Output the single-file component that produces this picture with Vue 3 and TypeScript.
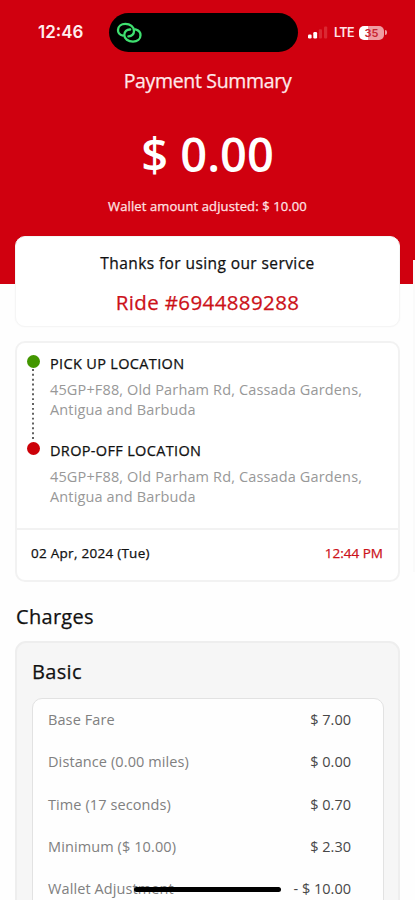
<script setup lang="ts">
interface Stop {
  kind: 'pickup' | 'dropoff'
  title: string
  lines: string[]
}

interface Charge {
  label: string
  amount: string
}

const stops: Stop[] = [
  {
    kind: 'pickup',
    title: 'PICK UP LOCATION',
    lines: ['45GP+F88, Old Parham Rd, Cassada Gardens,', 'Antigua and Barbuda'],
  },
  {
    kind: 'dropoff',
    title: 'DROP-OFF LOCATION',
    lines: ['45GP+F88, Old Parham Rd, Cassada Gardens,', 'Antigua and Barbuda'],
  },
]

const charges: Charge[] = [
  { label: 'Base Fare', amount: '$ 7.00' },
  { label: 'Distance (0.00 miles)', amount: '$ 0.00' },
  { label: 'Time (17 seconds)', amount: '$ 0.70' },
  { label: 'Minimum ($ 10.00)', amount: '$ 2.30' },
  { label: 'Wallet Adjustment', amount: '- $ 10.00' },
]
</script>

<template>
  <div class="screen">
    <header class="hero">
      <div class="status">
        <span class="clock">12:46</span>
        <div class="island">
          <svg class="link" width="26" height="22" viewBox="0 0 26 22" fill="none" stroke="#3fe070" stroke-width="2.3" stroke-linecap="round">
            <path d="M7 13.6 C3.6 13 1.9 10.6 2 7.9 C2.1 4.3 5.2 1.9 9.4 1.9 C14.2 1.9 18 5 18 8.9 C18 12.3 15.6 14.5 12.4 14.3" />
            <path d="M19.4 7.4 C22.6 8.2 24.5 10.6 24.5 13.3 C24.5 17 21.3 19.6 17 19.6 C12.2 19.6 8.3 16.8 8.3 12.9 C8.3 9.5 10.8 7.3 14.2 7.5" />
          </svg>
        </div>
        <div class="indicators">
          <svg width="20" height="13" viewBox="0 0 20 13">
            <rect x="0" y="8.5" width="3.6" height="4" rx="1.2" fill="#fff" />
            <rect x="5.3" y="6" width="3.8" height="6.5" rx="1.2" fill="#fff" />
            <rect x="10.8" y="3.2" width="3.2" height="9.3" rx="1" fill="#da2832" />
            <rect x="16" y="0.5" width="3.2" height="12" rx="1" fill="#da2832" />
          </svg>
          <span class="network">LTE</span>
          <div class="battery"><span class="level">35</span></div>
          <span class="nub"></span>
        </div>
      </div>
      <h1 class="title">Payment Summary</h1>
      <p class="total">$ 0.00</p>
      <p class="adjusted">Wallet amount adjusted: $ 10.00</p>
    </header>

    <main class="content">
      <section class="thanks">
        <p class="thanks-text">Thanks for using our service</p>
        <p class="ride">Ride #6944889288</p>
      </section>

      <section class="trip">
        <div class="route">
          <div v-for="stop in stops" :key="stop.kind" class="stop" :class="stop.kind">
            <div class="rail">
              <span class="dot"></span>
              <svg v-if="stop.kind === 'pickup'" class="dots" width="2" height="75" viewBox="0 0 2 75">
                <line x1="1" y1="1" x2="1" y2="75" stroke="#4c4c4c" stroke-width="1.8" stroke-dasharray="2 3" />
              </svg>
            </div>
            <div class="place">
              <h2 class="stop-title">{{ stop.title }}</h2>
              <p v-for="line in stop.lines" :key="line" class="address">{{ line }}</p>
            </div>
          </div>
        </div>
        <div class="when">
          <span class="date">02 Apr, 2024 (Tue)</span>
          <span class="time">12:44 PM</span>
        </div>
      </section>

      <h2 class="heading">Charges</h2>
      <section class="charges">
        <h3 class="plan">Basic</h3>
        <div class="items">
          <div v-for="charge in charges" :key="charge.label" class="item">
            <span class="label">{{ charge.label }}</span>
            <span class="amount">{{ charge.amount }}</span>
          </div>
        </div>
      </section>
    </main>

    <div class="scroll-edge"></div>
    <div class="home-bar"></div>
  </div>
</template>

<style>
body {
  margin: 0;
  background: #fefefe;
}
</style>

<style scoped>
.screen {
  position: relative;
  width: 415px;
  height: 900px;
  overflow: hidden;
  background: #fefefe;
  font-family: 'Open Sans', 'Noto Sans', sans-serif;
  color: #111;
}

.screen * {
  box-sizing: border-box;
}

h1,
h2,
h3,
p {
  margin: 0;
  font-weight: 400;
  white-space: nowrap;
}

.title,
.adjusted,
.thanks-text,
.ride,
.stop-title,
.when,
.heading,
.plan {
  -webkit-text-stroke: 0.25px currentColor;
}

.hero {
  height: 284px;
  padding-top: 13px;
  background: #d0000f;
  color: #fff;
  text-align: center;
}

.status {
  display: grid;
  grid-template-columns: 109px 189px 1fr;
  align-items: center;
  height: 39px;
  font-family: Inter, sans-serif;
}

.clock {
  padding-left: 38px;
  text-align: left;
  font-size: 17px;
  font-weight: 600;
  line-height: 39px;
  color: #ffeeee;
}

.island {
  height: 39px;
  padding: 9px 0 0 7px;
  border-radius: 20px;
  background: #000;
  text-align: left;
}

.link {
  display: block;
}

.indicators {
  display: flex;
  align-items: center;
  padding-left: 10px;
}

.network {
  width: 21px;
  margin-left: 5.5px;
  font-size: 12.5px;
  font-weight: 600;
  letter-spacing: -0.6px;
  color: #ffe5e7;
}

.battery {
  width: 25px;
  height: 14px;
  margin-left: 4.5px;
  border-radius: 5px;
  background: linear-gradient(90deg, #fff 0 36%, #ef9da2 36%);
}

.level {
  display: block;
  font-size: 11px;
  font-weight: 600;
  line-height: 14px;
  color: #c82532;
}

.nub {
  width: 2px;
  height: 5px;
  margin-left: 1px;
  border-radius: 0 2px 2px 0;
  background: #ef9da2;
}

.title {
  margin-top: 15px;
  font-size: 19.5px;
  line-height: 28px;
  letter-spacing: -0.33px;
  color: #ffe9ea;
}

.total {
  margin-top: 26px;
  font-size: 47px;
  font-weight: 600;
  line-height: 66px;
}

.adjusted {
  margin-top: 9px;
  font-size: 13px;
  line-height: 20px;
  letter-spacing: 0.11px;
  color: #ffe3e4;
}

.content {
  width: 385px;
  margin: -48px 0 0 15px;
}

.thanks {
  height: 91px;
  padding-top: 16px;
  border: 1px solid #f5f5f5;
  border-radius: 10px;
  background: #fff;
  box-shadow: 0 0 2px rgba(0, 0, 0, 0.04);
  text-align: center;
}

.thanks-text {
  font-size: 15.5px;
  line-height: 20px;
  letter-spacing: 0.41px;
}

.ride {
  margin-top: 15px;
  font-size: 20.5px;
  line-height: 28px;
  letter-spacing: 0.38px;
  color: #cc1119;
}

.trip {
  height: 241px;
  margin-top: 14px;
  border: 2px solid #f2f2f2;
  border-radius: 10px;
  background: #fff;
}

.route {
  height: 185px;
  padding: 11px 0 0 9px;
}

.stop {
  display: flex;
  height: 87px;
}

.rail {
  display: flex;
  flex-direction: column;
  align-items: center;
  width: 14px;
}

.dot {
  flex: none;
  width: 13px;
  height: 13px;
  margin-top: 1px;
  border-radius: 50%;
}

.pickup .dot {
  background: #429600;
}

.dropoff .dot {
  background: #cc0008;
}

.place {
  margin-left: 10px;
  padding-top: 1px;
}

.stop-title {
  height: 25px;
  font-size: 14.5px;
  line-height: 18px;
  letter-spacing: 0.34px;
}

.address {
  font-size: 14.5px;
  line-height: 20px;
  letter-spacing: 0.14px;
  color: #989898;
}

.when {
  display: flex;
  justify-content: space-between;
  height: 52px;
  padding: 0 15px 0 14px;
  border-top: 2px solid #f2f2f2;
  font-size: 13.5px;
  line-height: 46px;
}

.date {
  letter-spacing: 0.27px;
}

.time {
  color: #cc1119;
}

.heading {
  margin: 21px 0 0 1px;
  font-size: 20px;
  line-height: 28px;
  letter-spacing: 0.3px;
}

.charges {
  height: 400px;
  margin-top: 10px;
  padding: 15px 16px 0 16px;
  border: 2px solid #eeeeee;
  border-radius: 11px;
  background: #f6f6f6;
}

.plan {
  margin-left: -1px;
  font-size: 20px;
  line-height: 28px;
  letter-spacing: 0.35px;
}

.items {
  width: 352px;
  height: 300px;
  margin: 12px 0 0 -1px;
  padding: 0 32px 0 15px;
  border: 1px solid #e2e2e2;
  border-radius: 10px;
  background: #fefefe;
}

.item {
  display: flex;
  justify-content: space-between;
  height: 42.25px;
  font-size: 14.5px;
  line-height: 42px;
}

.label {
  letter-spacing: 0.1px;
  color: #808080;
}

.amount {
  color: #484848;
}

.scroll-edge {
  position: absolute;
  top: 260px;
  right: 0;
  width: 2px;
  height: 312px;
  background: #fafafa;
}

.home-bar {
  position: absolute;
  top: 887px;
  left: 134px;
  width: 147px;
  height: 5px;
  border-radius: 3px;
  background: #000;
}
</style>
